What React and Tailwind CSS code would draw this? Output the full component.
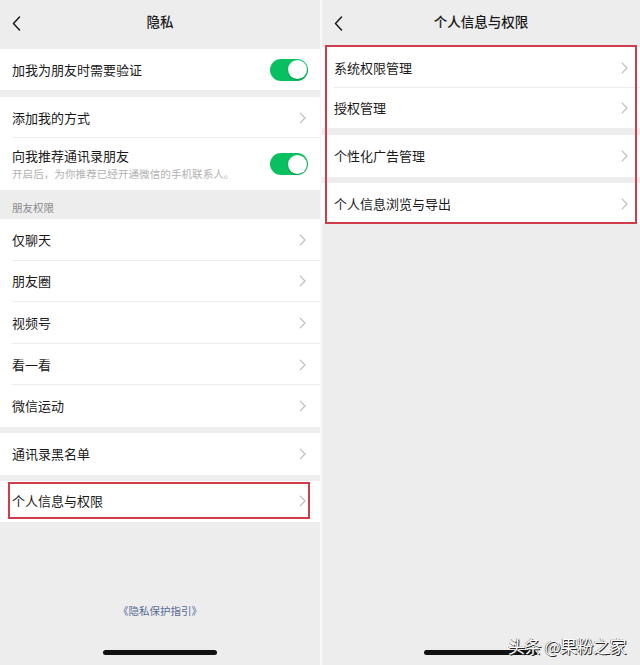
import React from 'react';

const font = "font-['Noto_Sans_CJK_SC',sans-serif]";

function Chevron() {
  return (
    <svg width="7" height="12" viewBox="0 0 7 12" fill="none" stroke="#bdbdbd" strokeWidth="1.2" strokeLinecap="round" strokeLinejoin="round">
      <path d="M1.2 1.2l4.8 4.8-4.8 4.8" />
    </svg>
  );
}

function BackArrow() {
  return (
    <svg width="9" height="15" viewBox="0 0 9 15" fill="none" stroke="#1a1a1a" strokeWidth="1.5" strokeLinecap="round" strokeLinejoin="round">
      <path d="M7.5 1L1.5 7.5l6 6.5" />
    </svg>
  );
}

function Toggle() {
  return (
    <div className="w-[38px] h-[22px] rounded-full bg-[#07c160] flex items-center justify-end p-[1.5px]">
      <div className="w-[19px] h-[19px] rounded-full bg-white shadow-[0_1px_2px_rgba(0,0,0,0.25)]" />
    </div>
  );
}

function Row({ label, sub, toggle, h = 'h-[41px]', divider, pr = 'pr-[14px]', children }) {
  return (
    <div className={`relative bg-white ${h}`}>
      <div className={`h-full flex items-center justify-between pl-3 ${pr}`}>
        <div className="flex flex-col">
          <span className="text-[13px] leading-[18px] text-[#1a1a1a]">{label}</span>
          {sub && <span className="text-[10.6px] leading-[14px] text-[#b2b2b2] mt-[2px]">{sub}</span>}
        </div>
        {toggle ? <Toggle /> : <Chevron />}
      </div>
      {divider && <div className="absolute bottom-0 left-3 right-0 h-px bg-[#ececec]" />}
      {children}
    </div>
  );
}

function NavBar({ title }) {
  return (
    <div className="h-[46px] flex items-center relative px-3">
      <BackArrow />
      <div className="absolute inset-x-0 top-0 h-[42px] flex items-center justify-center text-[13.5px] font-medium text-[#1a1a1a] pointer-events-none">
        {title}
      </div>
    </div>
  );
}

function HomeBar() {
  return (
    <div className="flex justify-center pb-[10px]">
      <div className="w-[114px] h-[5px] rounded-full bg-[#111]" />
    </div>
  );
}

function App() {
  return (
    <div className={`w-[640px] h-[665px] flex bg-[#ededed] overflow-hidden ${font}`}>
      {/* left: 隐私 */}
      <div className="w-[320px] h-full flex flex-col">
        <NavBar title="隐私" />
        <div className="mt-[3px]">
          <Row label="加我为朋友时需要验证" toggle pr="pr-[12px]" />
        </div>
        <div className="mt-[7px]">
          <Row label="添加我的方式" divider />
          <Row label="向我推荐通讯录朋友" sub="开启后，为你推荐已经开通微信的手机联系人。" toggle h="h-[52px]" pr="pr-[12px]" />
        </div>
        <div className="h-[29px] flex items-end pl-3 pb-[3px] text-[10.5px] text-[#8a8a8a]">朋友权限</div>
        <div>
          <Row label="仅聊天" h="h-[41.6px]" divider />
          <Row label="朋友圈" h="h-[41.6px]" divider />
          <Row label="视频号" h="h-[41.6px]" divider />
          <Row label="看一看" h="h-[41.6px]" divider />
          <Row label="微信运动" h="h-[41.6px]" />
        </div>
        <div className="mt-[6px]">
          <Row label="通讯录黑名单" h="h-[42px]" />
        </div>
        <div className="mt-[6px]">
          <Row label="个人信息与权限">
            <div className="absolute left-[8px] top-[1px] w-[302px] h-[37px] border-2 border-[#cf3c4c]" />
          </Row>
        </div>
        <div className="mt-auto h-5 flex items-center justify-center text-[10.5px] text-[#576b95]">《隐私保护指引》</div>
        <div className="mt-[29px]">
          <HomeBar />
        </div>
      </div>

      <div className="w-[2px] h-full bg-[#f8f8f8]" />

      {/* right: 个人信息与权限 */}
      <div className="flex-1 h-full flex flex-col relative">
        <NavBar title="个人信息与权限" />
        <div className="mt-[1px]">
          <Row label="系统权限管理" divider pr="pr-[12px]" />
          <Row label="授权管理" h="h-[40px]" pr="pr-[12px]" />
        </div>
        <div className="mt-[7px]">
          <Row label="个性化广告管理" h="h-[42px]" pr="pr-[12px]" />
        </div>
        <div className="mt-[6px]">
          <Row label="个人信息浏览与导出" h="h-[41px]" pr="pr-[12px]" />
        </div>
        <div className="absolute left-[3px] top-[45px] w-[312px] h-[179px] border-2 border-[#cf3c4c]" />
        <div className="mt-auto">
          <HomeBar />
        </div>
        <div className="absolute right-[14px] bottom-[9px] text-[17px] leading-5 text-white tracking-[-0.5px] [text-shadow:1px_1px_0_#222,-0.5px_-0.5px_0_#555]">
          头条 @果粉之家
        </div>
      </div>
    </div>
  );
}

export default App;
